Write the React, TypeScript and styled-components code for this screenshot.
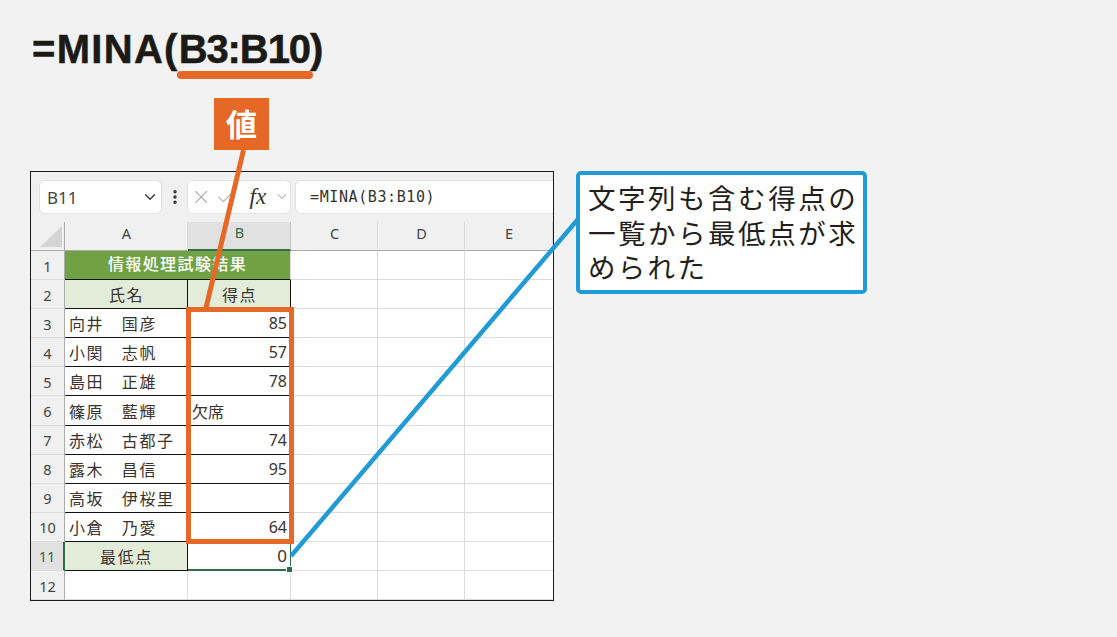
import React from 'react';
import styled, { createGlobalStyle } from 'styled-components';
import { Check, ChevronDown, MoreVertical, X } from 'lucide-react';

const CJK = `"Noto Sans", "Noto Sans CJK JP", sans-serif`;
const ORANGE = '#e56827';
const BLUE = '#219bd6';
const SEL_GREEN = '#2f6b48';

const names = ['向井　国彦', '小関　志帆', '島田　正雄', '篠原　藍輝', '赤松　古都子', '露木　昌信', '高坂　伊桜里', '小倉　乃愛'];
const scores = ['85', '57', '78', '欠席', '74', '95', '', '64'];
const columns = ['A', 'B', 'C', 'D', 'E'];

const App: React.FC = () => {
  return (
    <Page>
      <GlobalStyle />
      <Title>
        <Fn>=MINA(</Fn>
        <Arg>B3:B10</Arg>)
      </Title>
      <ValueBadge>値</ValueBadge>
      <Content>
        <Sheet>
          <Toolbar>
            <NameBox>
              <span>B11</span>
              <ChevronDown size={18} strokeWidth={1.6} color="#333" />
            </NameBox>
            <Dots>
              <MoreVertical size={18} strokeWidth={2.6} color="#333" />
            </Dots>
            <FxBox>
              <X size={24} strokeWidth={1.1} color="#a8a8a8" />
              <Check size={24} strokeWidth={1.1} color="#a8a8a8" />
              <FxLabel>fx</FxLabel>
              <ChevronDown size={17} strokeWidth={1.2} color="#777" />
            </FxBox>
            <FormulaBox>=MINA(B3:B10)</FormulaBox>
          </Toolbar>
          <Grid>
            <Corner />
            {columns.map((c) => (
              <ColHead key={c} $active={c === 'B'}>
                {c}
              </ColHead>
            ))}
            <RowHead>1</RowHead>
            <Cell $span={2} $tone="title">情報処理試験結果</Cell>
            <Cell />
            <Cell />
            <Cell $last />
            <RowHead>2</RowHead>
            <Cell $tone="label" $boxed $center>氏名</Cell>
            <Cell $tone="label" $boxed $center>得点</Cell>
            <Cell />
            <Cell />
            <Cell $last />
            {names.map((name, i) => (
              <React.Fragment key={name}>
                <RowHead>{i + 3}</RowHead>
                <Cell $boxed $wide>{name}</Cell>
                <Cell $boxed $right={scores[i] !== '欠席'}>{scores[i]}</Cell>
                <Cell />
                <Cell />
                <Cell $last />
              </React.Fragment>
            ))}
            <RowHead $active>11</RowHead>
            <Cell $tone="label" $boxed $center $wide>最低点</Cell>
            <SelectedCell>0</SelectedCell>
            <Cell />
            <Cell />
            <Cell $last />
            <RowHead>12</RowHead>
            <Cell />
            <Cell />
            <Cell />
            <Cell />
            <Cell $last />
            <RangeFrame />
          </Grid>
        </Sheet>
        <Callout>文字列も含む得点の一覧から最低点が求められた</Callout>
      </Content>
      <Leaders viewBox="0 0 1117 637">
        <line x1="243.5" y1="150" x2="206" y2="308" stroke={ORANGE} strokeWidth="5" />
        <line x1="291" y1="556" x2="579" y2="218" stroke={BLUE} strokeWidth="4.5" />
      </Leaders>
    </Page>
  );
};

const GlobalStyle = createGlobalStyle`
  html, body {
    margin: 0;
    padding: 0;
    background: #f2f2f2;
    overflow: hidden;
  }
`;

const Page = styled.div`
  position: relative;
  width: 1117px;
  height: 637px;
  box-sizing: border-box;
  padding: 26px 0 0 30px;
  background: #f2f2f2;
  font-family: ${CJK};
`;

const Title = styled.div`
  height: 46px;
  margin-left: 2px;
  font-family: "Liberation Sans", Arial, sans-serif;
  font-weight: 700;
  font-size: 40px;
  line-height: 46px;
  color: #1b1a17;
  -webkit-text-stroke: 0.5px #1b1a17;
`;

const Fn = styled.span`
  letter-spacing: 1.3px;
`;

const Arg = styled.span`
  position: relative;
  letter-spacing: -1.1px;
  &::after {
    content: '';
    position: absolute;
    left: -2px;
    right: -3px;
    bottom: -8px;
    height: 8px;
    border-radius: 4px;
    background: ${ORANGE};
  }
`;

const ValueBadge = styled.div`
  position: relative;
  z-index: 3;
  width: 55px;
  height: 52px;
  margin: 26px 0 21px 184px;
  background: ${ORANGE};
  color: #fff;
  font-family: "Noto Sans CJK JP", sans-serif;
  font-weight: 700;
  font-size: 31px;
  line-height: 50px;
  text-align: center;
`;

const Content = styled.div`
  display: flex;
  align-items: flex-start;
  gap: 22px;
`;

const Sheet = styled.div`
  width: 522px;
  border: 1px solid #1a1a1a;
  background: #fff;
  overflow: hidden;
`;

const Toolbar = styled.div`
  display: flex;
  align-items: center;
  height: 50px;
  box-sizing: border-box;
  padding: 0 0 1px 8px;
  background: #f0f0f0;
`;

const FieldBox = styled.div`
  display: flex;
  align-items: center;
  height: 34px;
  box-sizing: border-box;
  background: #fff;
  border: 1px solid #e2e2e2;
`;

const NameBox = styled(FieldBox)`
  width: 123px;
  flex: none;
  justify-content: space-between;
  padding: 1px 2px 0 7px;
  border-radius: 6px;
  font-size: 17px;
  color: #444;
`;

const Dots = styled.div`
  display: flex;
  justify-content: center;
  width: 25px;
  flex: none;
`;

const FxBox = styled(FieldBox)`
  width: 104px;
  flex: none;
  padding: 0 0 0 2px;
  gap: 3px;
  border-radius: 6px;
`;

const FxLabel = styled.span`
  margin: 0 5px 0 9px;
  font-family: "Liberation Serif", serif;
  font-style: italic;
  font-size: 23px;
  line-height: 1;
  color: #333;
`;

const FormulaBox = styled(FieldBox)`
  flex: 1;
  margin-left: 4px;
  padding: 1px 0 0 14px;
  border-right: none;
  border-radius: 6px 0 0 6px;
  font-family: "DejaVu Sans Mono", monospace;
  font-size: 15px;
  letter-spacing: 0.6px;
  color: #333;
`;

const Grid = styled.div`
  position: relative;
  display: grid;
  grid-template-columns: 34px 123px 103px 87px 87px 88px;
  grid-template-rows: 29px repeat(12, 29.1px);
`;

const Corner = styled.div`
  background: #f0f0f0;
  border-right: 1px solid #ababab;
  border-bottom: 1px solid #ababab;
  position: relative;
  &::after {
    content: '';
    position: absolute;
    right: 2px;
    bottom: 3px;
    width: 22px;
    height: 21px;
    background: #d4d4d4;
    clip-path: polygon(100% 0, 100% 100%, 0 100%);
  }
`;

const ColHead = styled.div<{ $active?: boolean }>`
  display: flex;
  align-items: center;
  justify-content: center;
  box-sizing: border-box;
  padding: 0 0 7px 1px;
  background: ${(p) => (p.$active ? '#e1e1e1' : '#f0f0f0')};
  color: ${(p) => (p.$active ? SEL_GREEN : '#444')};
  border-right: 1px solid ${(p) => (p.$active ? '#c8c8c8' : '#dcdcdc')};
  border-bottom: ${(p) => (p.$active ? `2px solid ${SEL_GREEN}` : '1px solid #ababab')};
  font-size: 14.5px;
`;

const RowHead = styled.div<{ $active?: boolean }>`
  display: flex;
  align-items: center;
  justify-content: center;
  box-sizing: border-box;
  padding-top: 1px;
  background: ${(p) => (p.$active ? '#e1e1e1' : '#f0f0f0')};
  color: ${(p) => (p.$active ? SEL_GREEN : '#444')};
  border-right: ${(p) => (p.$active ? `2px solid ${SEL_GREEN}` : '1px solid #ababab')};
  border-bottom: 1px solid #dcdcdc;
  font-size: 14.5px;
`;

const Cell = styled.div<{
  $span?: number;
  $tone?: 'title' | 'label';
  $boxed?: boolean;
  $center?: boolean;
  $right?: boolean;
  $wide?: boolean;
  $last?: boolean;
}>`
  display: flex;
  align-items: center;
  box-sizing: border-box;
  padding: ${(p) => (p.$tone === 'title' ? '0 4px 4px' : '0 3px 0 4px')};
  grid-column: ${(p) => (p.$span ? `span ${p.$span}` : 'auto')};
  justify-content: ${(p) => (p.$center || p.$tone === 'title' ? 'center' : p.$right ? 'flex-end' : 'flex-start')};
  background: ${(p) => (p.$tone === 'title' ? '#70a244' : p.$tone === 'label' ? '#e2ecd9' : '#fff')};
  color: ${(p) => (p.$tone === 'title' ? '#fff' : '#3a3330')};
  font-weight: ${(p) => (p.$tone === 'title' ? 500 : 400)};
  font-size: 16px;
  letter-spacing: ${(p) => (p.$wide || p.$tone === 'label' ? 1.6 : p.$tone === 'title' ? 1.4 : 0)}px;
  white-space: nowrap;
  border-right: 1px solid ${(p) => (p.$boxed ? '#111' : p.$last ? 'transparent' : '#dcdcdc')};
  border-bottom: 1px solid ${(p) => (p.$boxed || p.$tone === 'title' ? '#111' : '#dcdcdc')};
`;

const SelectedCell = styled.div`
  display: flex;
  align-items: center;
  justify-content: flex-end;
  position: relative;
  box-sizing: border-box;
  padding: 0 3px 0 0;
  background: #fff;
  color: #3a3330;
  font-size: 17px;
  border-right: 1px solid ${SEL_GREEN};
  border-bottom: 2px solid ${SEL_GREEN};
  &::after {
    content: '';
    position: absolute;
    right: -2px;
    bottom: -3px;
    width: 5px;
    height: 5px;
    background: ${SEL_GREEN};
    outline: 1px solid #fff;
  }
`;

const RangeFrame = styled.div`
  position: absolute;
  grid-column: 3 / 4;
  grid-row: 4 / 12;
  top: -2px;
  left: -2px;
  right: -3px;
  bottom: -2px;
  border: 5px solid ${ORANGE};
`;

const Callout = styled.div`
  position: relative;
  z-index: 2;
  width: 291px;
  height: 123px;
  box-sizing: border-box;
  padding: 5px 5px 0 8px;
  background: #fff;
  border: 4px solid ${BLUE};
  border-radius: 5px;
  font-family: "Noto Sans CJK JP", sans-serif;
  font-size: 27.5px;
  line-height: 34.5px;
  letter-spacing: 2.3px;
  color: #231f1c;
  text-align: justify;
`;

const Leaders = styled.svg`
  position: absolute;
  top: 0;
  left: 0;
  width: 1117px;
  height: 637px;
  z-index: 1;
  pointer-events: none;
`;

export default App;
